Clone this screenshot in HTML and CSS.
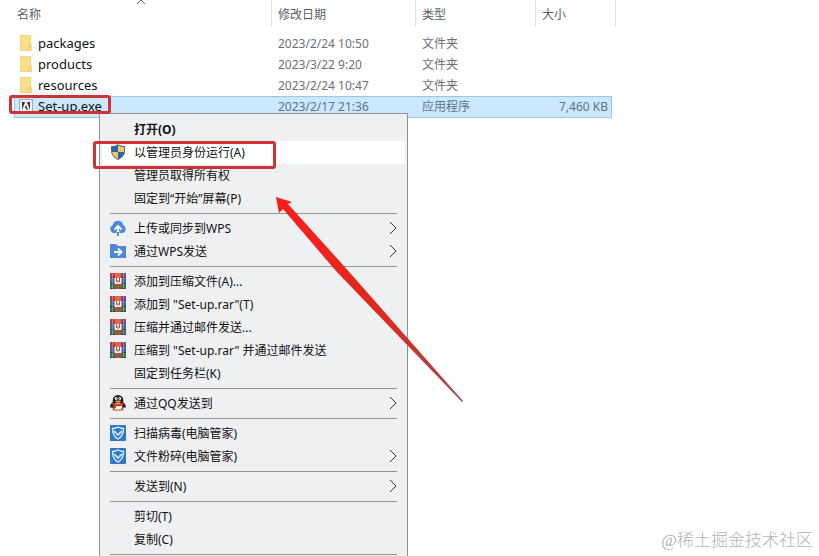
FILE: index.html
```html
<!DOCTYPE html>
<html lang="zh-CN">
<head>
  <meta charset="UTF-8">
  <meta name="viewport" content="width=device-width, initial-scale=1.0">
  <title>Set-up</title>
  <link rel="stylesheet" href="styles.css">
</head>
<body>
  <!-- Shared icons -->
  <svg class="sprite" aria-hidden="true">
    <symbol id="folder" viewBox="0 0 16 16">
      <path d="M2 0h11v10h1v6H2z" fill="#f8df8b"/>
      <path d="M2.500 .5h10v9.500l1 1v4.500h-11z" fill="none" stroke="#f0d67c"/>
      <path d="M11 15v-4l2-1" fill="none" stroke="#e6c766"/>
    </symbol>
    <symbol id="adobe" viewBox="0 0 16 16">
      <rect x="1.500" y="1.500" width="13" height="13" fill="#f4f4f4" stroke="#a6a9ad"/>
      <path d="M4 4h3L4 12zM9 4h3v8zM8 7l2 5H8.500L8 10H6.800z" fill="#333"/>
    </symbol>
    <symbol id="shield" viewBox="0 0 16 16">
      <path d="M8 0c2 1.500 4 2 7 2v5c0 4-3 7-7 9-4-2-7-5-7-9V2c3 0 5-.5 7-2z" fill="#5b6b7c"/>
      <path d="M8 1.200V8H2V3c2.500 0 4.500-.6 6-1.800zM8 8h6c-.3 3-2.500 5.300-6 7z" fill="#2b65ad"/>
      <path d="M8 1.200V8h6V3c-2.500 0-4.500-.6-6-1.800zM8 8H2c.3 3 2.500 5.300 6 7z" fill="#ecca5c"/>
    </symbol>
    <symbol id="cloud" viewBox="0 0 16 16">
      <path d="M4 13a4.200 4.200 0 0 1-1.200-8A5.300 5.300 0 0 1 13.200 5 4.200 4.200 0 0 1 12 13z" fill="#4a8ad8"/>
      <path d="M6.500 11h3v2h-3z" fill="#eff0f1"/>
      <path d="M8 15.500V7M4.500 9.500L8 6l3.500 3.500" fill="none" stroke="#fff" stroke-width="1.800"/>
      <path d="M8 12v4" stroke="#4a8ad8" stroke-width="2"/>
    </symbol>
    <symbol id="send" viewBox="0 0 16 16">
      <path d="M0 1h6l2 2h8v12H0z" fill="#4a8ad8"/>
      <path d="M4 9h7M8 5.500L11.500 9 8 12.500" fill="none" stroke="#fff" stroke-width="1.800"/>
    </symbol>
    <symbol id="rar" viewBox="0 0 16 16">
      <path d="M0 0h16v5H0z" fill="#b8404c"/>
      <path d="M11 0h5v5h-5z" fill="#7c4a80"/>
      <path d="M0 5.500h16v5H0z" fill="#47649f"/>
      <path d="M0 11h16v5H0z" fill="#2f7c55"/>
      <path d="M0 5h16M0 10.500h16M0 15.500h16" stroke="#4a3540"/>
      <path d="M2.500 0v16M13.500 0v16" stroke="#d8c9c0" stroke-opacity=".4"/>
      <path d="M5 0h6v16H5z" fill="#df6b45"/>
      <path d="M5 11h6v5H5z" fill="#a8543c"/>
      <path d="M4.500 5h7v6h-7z" fill="#fbf2ea"/>
      <path d="M6.500 5v4M9.500 5v4M8 7v3" fill="none" stroke="#c04a4a"/>
    </symbol>
    <symbol id="qq" viewBox="0 0 16 16">
      <path d="M3 7C0 9 0 12 .5 13l2.500-1.500zM13 7c3 2 3 5 2.500 6L13 11.500z" fill="#181818"/>
      <ellipse cx="8" cy="5.500" rx="5.300" ry="5.500" fill="#181818"/>
      <ellipse cx="8" cy="11" rx="6" ry="4.500" fill="#181818"/>
      <ellipse cx="8" cy="11.500" rx="4.300" ry="3.700" fill="#fff"/>
      <path d="M2.500 7.500c3.500 1.800 7.500 1.800 11 0l.5 2.200c-4 2-8 2-12 0z" fill="#d8342b"/>
      <path d="M4 9h2v4H4z" fill="#d8342b"/>
      <ellipse cx="6.200" cy="3.600" rx="1.400" ry="1.700" fill="#fff"/>
      <ellipse cx="9.800" cy="3.600" rx="1.400" ry="1.700" fill="#fff"/>
      <circle cx="6.600" cy="3.800" r=".6" fill="#181818"/>
      <circle cx="9.400" cy="3.800" r=".6" fill="#181818"/>
      <ellipse cx="8" cy="6.500" rx="3" ry="1" fill="#eea32c"/>
      <path d="M2 14.800c0-1.500 5.500-1.500 5.500 0s-5.500 1.300-5.500 0zM8.500 14.800c0-1.500 5.500-1.500 5.500 0s-5.500 1.300-5.500 0z" fill="#d88a2c"/>
    </symbol>
    <symbol id="guard" viewBox="0 0 16 16">
      <rect width="16" height="16" rx="1" fill="#3276c6"/>
      <path d="M8 2c2 1 3.500 1.500 5.500 1.500 0 5-1 8-5.500 10.500C3.500 11.500 2.500 8.500 2.500 3.500 4.500 3.500 6 3 8 2z" fill="none" stroke="#e8f6fc" stroke-width="1.300"/>
      <path d="M4 6l4 4 4-4" fill="none" stroke="#b4e8f8" stroke-width="1.800"/>
    </symbol>
    <symbol id="chevron" viewBox="0 0 8 14">
      <path d="M1 1l6 6-6 6" fill="none" stroke="#333"/>
    </symbol>
  </svg>

  <main class="explorer">
    <table class="files">
      <colgroup>
        <col class="col-name">
        <col class="col-date">
        <col class="col-type">
        <col class="col-size">
        <col class="col-end">
      </colgroup>
      <thead>
        <tr>
          <th>名称<svg class="sort" viewBox="0 0 8 4"><path d="M0 4l4-4 4 4" fill="none" stroke="#666"/></svg></th>
          <th>修改日期</th>
          <th>类型</th>
          <th colspan="2">大小</th>
        </tr>
      </thead>
      <tbody>
        <tr>
          <td><span class="file"><svg class="icon"><use href="#folder"/></svg>packages</span></td>
          <td>2023/2/24 10:50</td>
          <td>文件夹</td>
          <td></td>
        </tr>
        <tr>
          <td><span class="file"><svg class="icon"><use href="#folder"/></svg>products</span></td>
          <td>2023/3/22 9:20</td>
          <td>文件夹</td>
          <td></td>
        </tr>
        <tr>
          <td><span class="file"><svg class="icon"><use href="#folder"/></svg>resources</span></td>
          <td>2023/2/24 10:47</td>
          <td>文件夹</td>
          <td></td>
        </tr>
        <tr class="selected">
          <td><span class="file"><svg class="icon"><use href="#adobe"/></svg>Set-up.exe</span></td>
          <td>2023/2/17 21:36</td>
          <td>应用程序</td>
          <td class="size">7,460 KB</td>
        </tr>
      </tbody>
    </table>

    <!-- Right-click menu -->
    <div class="menu" role="menu">
      <button class="item default" role="menuitem">打开(O)</button>
      <button class="item active" role="menuitem"><svg class="icon"><use href="#shield"/></svg>以管理员身份运行(A)</button>
      <button class="item" role="menuitem">管理员取得所有权</button>
      <button class="item" role="menuitem">固定到“开始”屏幕(P)</button>
      <hr>
      <button class="item" role="menuitem"><svg class="icon"><use href="#cloud"/></svg>上传或同步到WPS<svg class="more"><use href="#chevron"/></svg></button>
      <button class="item" role="menuitem"><svg class="icon"><use href="#send"/></svg>通过WPS发送<svg class="more"><use href="#chevron"/></svg></button>
      <hr>
      <button class="item" role="menuitem"><svg class="icon"><use href="#rar"/></svg>添加到压缩文件(A)...</button>
      <button class="item" role="menuitem"><svg class="icon"><use href="#rar"/></svg>添加到 "Set-up.rar"(T)</button>
      <button class="item" role="menuitem"><svg class="icon"><use href="#rar"/></svg>压缩并通过邮件发送...</button>
      <button class="item" role="menuitem"><svg class="icon"><use href="#rar"/></svg>压缩到 "Set-up.rar" 并通过邮件发送</button>
      <button class="item" role="menuitem">固定到任务栏(K)</button>
      <hr>
      <button class="item" role="menuitem"><svg class="icon"><use href="#qq"/></svg>通过QQ发送到<svg class="more"><use href="#chevron"/></svg></button>
      <hr>
      <button class="item" role="menuitem"><svg class="icon"><use href="#guard"/></svg>扫描病毒(电脑管家)</button>
      <button class="item" role="menuitem"><svg class="icon"><use href="#guard"/></svg>文件粉碎(电脑管家)<svg class="more"><use href="#chevron"/></svg></button>
      <hr>
      <button class="item" role="menuitem">发送到(N)<svg class="more"><use href="#chevron"/></svg></button>
      <hr>
      <button class="item" role="menuitem">剪切(T)</button>
      <button class="item" role="menuitem">复制(C)</button>
      <hr>
    </div>

    <!-- Red marks over the list and the menu -->
    <div class="mark mark-file"></div>
    <div class="mark mark-run"></div>
    <svg class="arrow" viewBox="0 0 188 206">
      <defs>
        <linearGradient id="fade" x1="0" y1="0" x2="1" y2="1">
          <stop offset="0" stop-color="#fb1d18"/>
          <stop offset=".6" stop-color="#dc2a20"/>
          <stop offset="1" stop-color="#a04a50"/>
        </linearGradient>
      </defs>
      <path d="M0 0L16 5L12 7L67 68L187 204L186 205L60 74L7 12L3 16Z" fill="url(#fade)"/>
    </svg>
    <p class="watermark">@稀土掘金技术社区</p>
  </main>
</body>
</html>
```
FILE: styles.css
```css
* {
  margin: 0;
  padding: 0;
  box-sizing: border-box;
}

body {
  font-family: "Noto Sans", "Noto Sans CJK SC", sans-serif;
  font-size: 12px;
  color: #111;
  background: #fff;
}

.sprite {
  position: absolute;
  width: 0;
  height: 0;
}

.explorer {
  position: relative;
  height: 100vh;
  overflow: hidden;
}

.icon {
  width: 16px;
  height: 16px;
  flex: none;
}

/* File list */
.files {
  margin-left: 14px;
  table-layout: fixed;
  border-spacing: 0;
}

.col-name { width: 258px; }
.col-date { width: 144px; }
.col-type { width: 120px; }
.col-size { width: 76px; }
.col-end { width: 4px; }

.files th {
  position: relative;
  height: 27px;
  padding-left: 6px;
  border-right: 1px solid #e3e3e3;
  font-weight: 400;
  text-align: left;
  color: #5a5f66;
}

.files th:first-child {
  padding-left: 3px;
}

.sort {
  position: absolute;
  top: 0;
  left: 123px;
  width: 8px;
  height: 4px;
}

.files tbody::before {
  content: "";
  display: block;
  height: 6px;
}

.files td {
  height: 21px;
  padding-left: 6px;
  line-height: 18px;
  color: #6b6f75;
  white-space: nowrap;
}

.files td:first-child {
  padding-left: 4px;
}

.file {
  display: flex;
  align-items: center;
  gap: 4px;
  padding-bottom: 2px;
  font-size: 13px;
  color: #111;
}

.files .selected td {
  height: 22px;
  background: #cce8ff;
  border-top: 1px solid #99c9ea;
  border-bottom: 1px solid #99c9ea;
  color: #5b7488;
}

.files .selected td:first-child {
  border-left: 1px solid #99c9ea;
  padding-left: 3px;
}

.files .selected .size {
  border-right: 1px solid #99c9ea;
  padding-right: 3px;
  text-align: right;
}

/* Context menu */
.menu {
  position: absolute;
  top: 113px;
  left: 99px;
  width: 309px;
  padding: 4px 2px;
  background: #eff0f1;
  border: 1px solid #8f9296;
}

.menu hr {
  height: 1px;
  margin: 3px 8px;
  border: none;
  background: #929497;
}

.item {
  display: flex;
  align-items: center;
  gap: 8px;
  width: 100%;
  height: 23px;
  padding: 0 8px 2px 32px;
  border: none;
  background: none;
  font: inherit;
  color: inherit;
  text-align: left;
  white-space: nowrap;
}

.item:has(.icon) {
  padding-left: 8px;
}

.item.default {
  font-weight: 700;
}

.item.active,
.item:hover {
  background: #fff;
}

.more {
  width: 8px;
  height: 14px;
  margin-left: auto;
}

/* Marks */
.mark {
  position: absolute;
  border: 3px solid #cf3434;
  border-radius: 3px;
  pointer-events: none;
}

.mark-file {
  top: 95px;
  left: 9px;
  width: 102px;
  height: 19px;
}

.mark-run {
  top: 141px;
  left: 93px;
  width: 183px;
  height: 28px;
}

.arrow {
  position: absolute;
  top: 197px;
  left: 276px;
  width: 188px;
  height: 206px;
  pointer-events: none;
}

.watermark {
  position: absolute;
  right: 6px;
  bottom: 3px;
  font-family: "Liberation Serif", "Noto Sans CJK SC", serif;
  font-size: 17px;
  font-weight: 300;
  line-height: 24px;
  color: #b4b4b4;
}
```
